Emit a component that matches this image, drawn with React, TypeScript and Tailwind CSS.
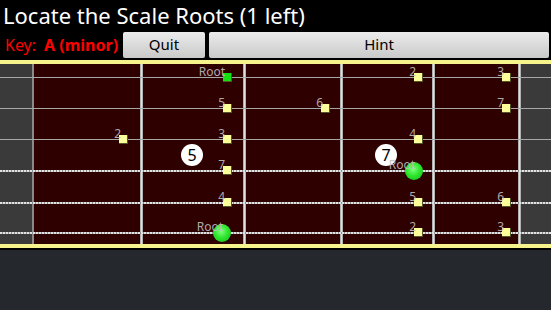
import React from 'react';

type Note = { x: number; y: number; label: string; kind: 'deg' | 'root' | 'hit' };

// string offsets inside the board (px from board top)
const strings = [
  { y: 13, wound: false },
  { y: 44, wound: false },
  { y: 75, wound: false },
  { y: 106, wound: true },
  { y: 138, wound: true },
  { y: 168, wound: true },
];

// fret spaces between the nut and the last fret
const spaces = [106, 100, 94, 89, 83];

const notes: Note[] = [
  { x: 227, y: 13, label: 'Root', kind: 'root' },
  { x: 418, y: 13, label: '2', kind: 'deg' },
  { x: 506, y: 13, label: '3', kind: 'deg' },
  { x: 227, y: 44, label: '5', kind: 'deg' },
  { x: 325, y: 44, label: '6', kind: 'deg' },
  { x: 506, y: 44, label: '7', kind: 'deg' },
  { x: 123, y: 75, label: '2', kind: 'deg' },
  { x: 227, y: 75, label: '3', kind: 'deg' },
  { x: 418, y: 75, label: '4', kind: 'deg' },
  { x: 227, y: 106, label: '7', kind: 'deg' },
  { x: 414, y: 106, label: 'Root', kind: 'hit' },
  { x: 227, y: 138, label: '4', kind: 'deg' },
  { x: 418, y: 138, label: '5', kind: 'deg' },
  { x: 506, y: 138, label: '6', kind: 'deg' },
  { x: 222, y: 168, label: 'Root', kind: 'hit' },
  { x: 418, y: 168, label: '2', kind: 'deg' },
  { x: 506, y: 168, label: '3', kind: 'deg' },
];

const markers = [
  { x: 192, label: '5' },
  { x: 386, label: '7' },
];

function NoteMark({ note }: { note: Note }) {
  return (
    <>
      {note.kind === 'hit' ? (
        <div
          className="absolute w-[18px] h-[18px] -ml-[9px] -mt-[8px] rounded-full bg-[radial-gradient(circle_at_45%_40%,#7dff7d_0%,#2ee62e_45%,#13b913_100%)]"
          style={{ left: note.x, top: note.y }}
        />
      ) : (
        <div
          className={
            'absolute w-[9px] h-[9px] -ml-[4px] -mt-[4px] border-r border-b border-[#55552a] ' +
            (note.kind === 'root' ? 'bg-[#14e014]' : 'bg-[#ffff99]')
          }
          style={{ left: note.x, top: note.y }}
        />
      )}
      <div
        className="absolute -translate-x-full -translate-y-full text-[12px] leading-[12px] text-[#bdbdbd] opacity-90"
        style={{ left: note.kind === 'hit' ? note.x + 1 : note.x - 2, top: note.y + 1 }}
      >
        {note.label}
      </div>
    </>
  );
}

export default function App() {
  return (
    <div className="w-[551px] h-[310px] bg-black font-['Noto_Sans',sans-serif] flex flex-col overflow-hidden">
      {/* header */}
      <div className="h-[31px] pl-[3px] text-white text-[22px] leading-[31px] whitespace-nowrap">
        Locate the Scale Roots (1 left)
      </div>
      <div className="h-[27px] flex items-center">
        <div className="w-[123px] pl-[5px] text-[#ff0000] text-[16px] leading-none whitespace-nowrap">
          Key:<span className="font-bold ml-[8px]">A (minor)</span>
        </div>
        <button className="w-[82px] h-[26px] rounded-[2px] bg-[linear-gradient(#ececec,#c9c9c9)] text-black text-[15px]">
          Quit
        </button>
        <button className="ml-[4px] w-[340px] h-[26px] rounded-[2px] bg-[linear-gradient(#ececec,#c9c9c9)] text-black text-[15px]">
          Hint
        </button>
      </div>

      {/* fretboard */}
      <div className="mt-[2px] h-[4px] bg-[#f6f28c]" />
      <div className="relative h-[180px] flex">
        <div className="w-[32px] bg-[#3a3a3a]" />
        <div className="w-[2px] bg-[#8a8a8a]" />
        {spaces.map((w, i) => (
          <React.Fragment key={i}>
            <div className="bg-[#2e0000]" style={{ width: w }} />
            <div className="w-[3px] bg-[linear-gradient(90deg,#9a9a9a,#e0e0e0,#9a9a9a)]" />
          </React.Fragment>
        ))}
        <div className="flex-1 bg-[#3a3a3a]" />

        {strings.map((s, i) => (
          <div
            key={i}
            className={
              'absolute left-0 right-0 ' +
              (s.wound
                ? 'h-[2px] bg-[repeating-linear-gradient(90deg,#e2e2e2_0px,#e2e2e2_2px,#8c8c8c_2px,#8c8c8c_3px)]'
                : 'h-[1px] bg-[#a8a8a8]')
            }
            style={{ top: s.y }}
          />
        ))}

        {markers.map((m) => (
          <div
            key={m.label}
            className="absolute w-[22px] h-[22px] -ml-[11px] -mt-[11px] rounded-full bg-white flex items-center justify-center text-black text-[16px] leading-none"
            style={{ left: m.x, top: 91 }}
          >
            {m.label}
          </div>
        ))}

        {notes.map((n, i) => (
          <NoteMark key={i} note={n} />
        ))}
      </div>
      <div className="h-[4px] bg-[#f6f28c]" />
      <div className="h-[2px] bg-black" />
      <div className="flex-1 bg-[#25282c]" />
    </div>
  );
}
